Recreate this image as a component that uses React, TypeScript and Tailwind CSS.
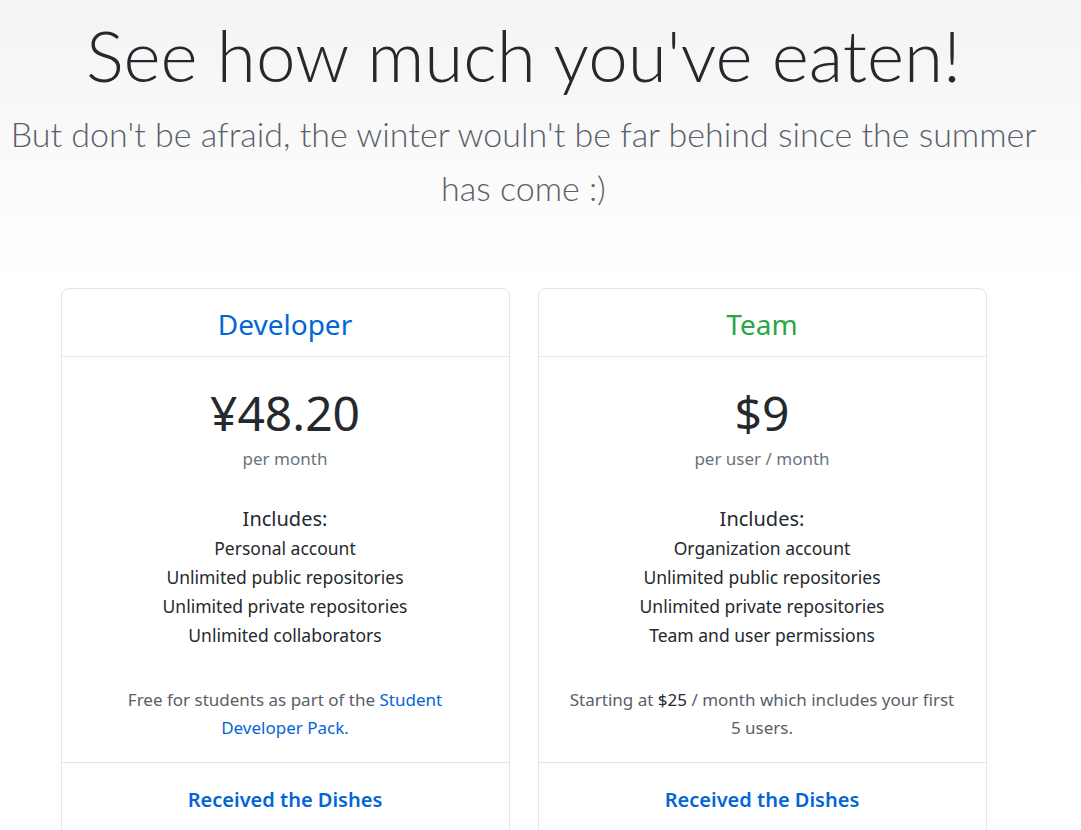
import React from 'react'

type Plan = {
  name: string
  nameColor: string
  price: string
  period: string
  features: string[]
  note: React.ReactNode
}

const plans: Plan[] = [
  {
    name: 'Developer',
    nameColor: 'text-[#0366d6]',
    price: '¥48.20',
    period: 'per month',
    features: [
      'Personal account',
      'Unlimited public repositories',
      'Unlimited private repositories',
      'Unlimited collaborators',
    ],
    note: (
      <>
        Free for students as part of the{' '}
        <a href="#" className="text-[#0366d6]">
          Student Developer Pack
        </a>
        .
      </>
    ),
  },
  {
    name: 'Team',
    nameColor: 'text-[#28a745]',
    price: '$9',
    period: 'per user / month',
    features: [
      'Organization account',
      'Unlimited public repositories',
      'Unlimited private repositories',
      'Team and user permissions',
    ],
    note: (
      <>
        Starting at <span className="text-[#24292e]">$25</span> / month which includes your first 5 users.
      </>
    ),
  },
]

function PlanCard({ plan }: { plan: Plan }) {
  return (
    <div className="w-[449px] rounded-lg border border-[#e1e4e8] bg-white text-center">
      {/* Header */}
      <div className="h-[68px] pt-[2px] border-b border-[#e1e4e8] flex items-center justify-center">
        <h3 className={`text-[28px] font-normal ${plan.nameColor}`}>{plan.name}</h3>
      </div>

      {/* Body */}
      <div className="px-7 pt-[24px] pb-[20px]">
        <div className="text-[48px] leading-[64px] text-[#24292e]">{plan.price}</div>
        <div className="mt-[1px] text-[17px] leading-[26px] text-[#6a737d]">{plan.period}</div>

        <div className="mt-[33px] text-[20px] leading-[28px] text-[#24292e]">Includes:</div>
        <ul className="mt-[1px] text-[17.5px] leading-[29px] text-[#24292e]">
          {plan.features.map((f) => (
            <li key={f}>{f}</li>
          ))}
        </ul>

        <p className="mt-[36px] text-[17px] leading-[28px] text-[#586069]">{plan.note}</p>
      </div>

      {/* Footer */}
      <div className="border-t border-[#e1e4e8] pt-[22px] pb-[20px]">
        <a href="#" className="text-[20px] leading-[30px] font-semibold text-[#0366d6]">
          Received the Dishes
        </a>
      </div>
    </div>
  )
}

export default function App() {
  return (
    <div
      className="min-h-screen bg-white overflow-hidden"
      style={{ fontFamily: '"Noto Sans", "Open Sans", sans-serif' }}
    >
      <div className="bg-gradient-to-b from-[#f4f4f4] to-white">
        <div className="w-[1047px] text-center pt-[11px] pb-[74px]">
          <h1 className="font-['Lato',sans-serif] font-light text-[71px] leading-[88px] text-[#24292e]">
            See how much you've eaten!
          </h1>
          <p className="mt-[8px] font-['Lato',sans-serif] font-light text-[34px] leading-[54px] text-[#586069] px-2">
            But don't be afraid, the winter wouln't be far behind since the summer has come :)
          </p>
        </div>
      </div>

      <div className="w-[1047px] -mt-[1px] flex justify-center gap-[28px]">
        {plans.map((p) => (
          <PlanCard key={p.name} plan={p} />
        ))}
      </div>
    </div>
  )
}
